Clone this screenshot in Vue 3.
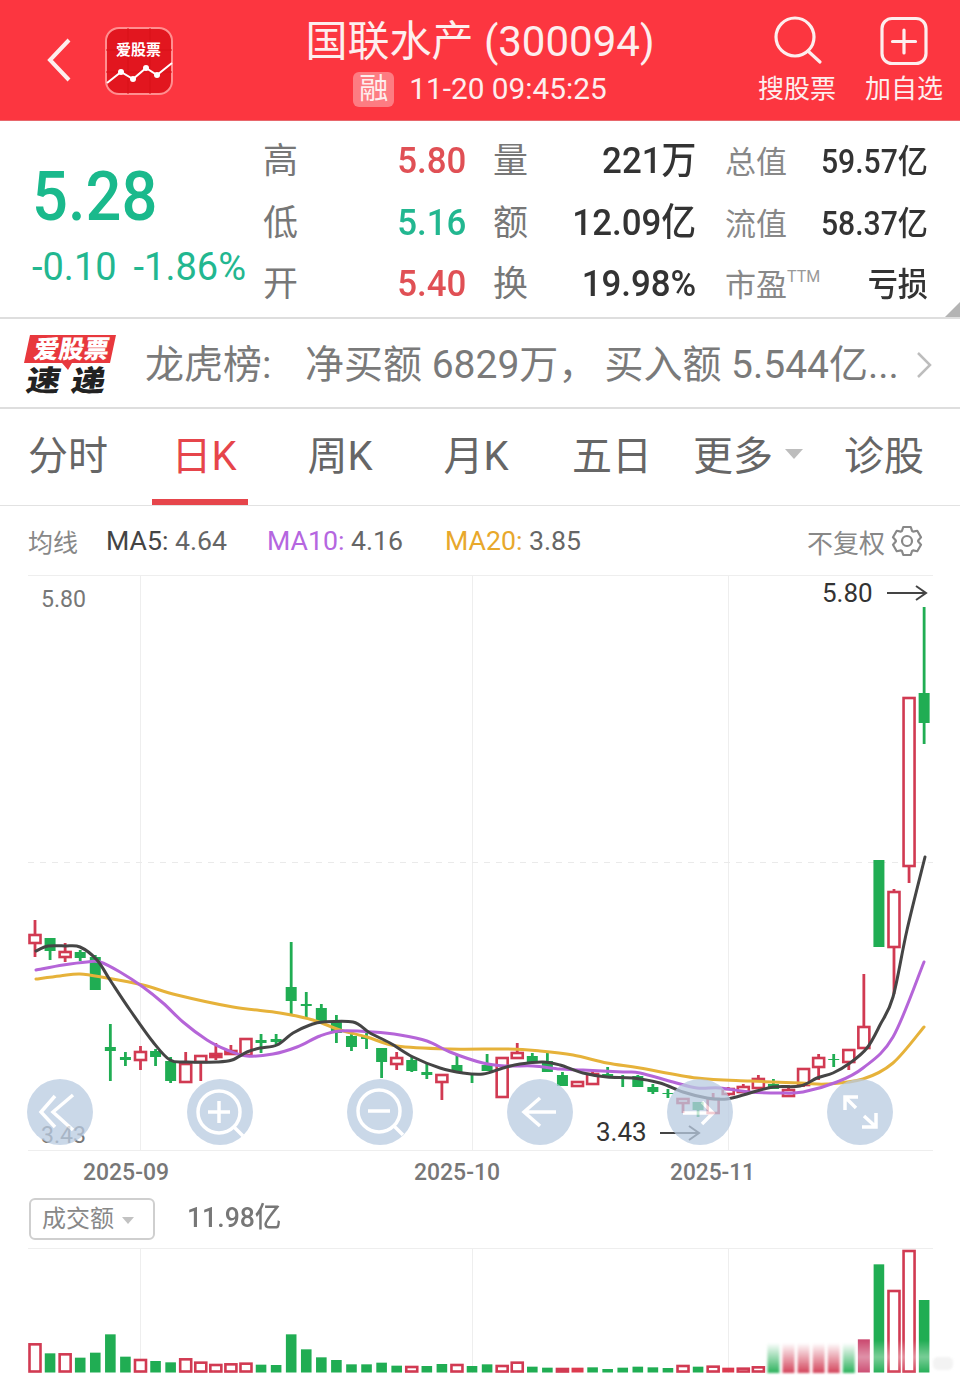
<script setup>
const px = (i) => 35 + i * 15.07
const C = [
  ['r',934,943,920,957],['g',938,951,938,960],['r',951,957,943,962],['g',952,958,950,961],['g',957,990,955,990],
  ['g',1047,1051,1024,1081],['g',1057,1060,1052,1066],['r',1051,1060,1046,1070],['g',1051,1057,1049,1066],['g',1061,1081,1057,1083],
  ['r',1063,1082,1052,1082],['r',1055,1062,1055,1081],['s',1053,1057,1043,1060],['s',1050,1054,1045,1055],['r',1038,1055,1038,1055],
  ['g',1040,1043,1034,1053],['g',1039,1042,1034,1045],['g',987,1001,942,1015],['g',1004,1006,992,1018],['g',1008,1022,1004,1023],
  ['g',1022,1033,1015,1043],['g',1036,1047,1033,1051],['g',1037,1039,1033,1049],['g',1048,1062,1048,1078],['r',1057,1064,1052,1070],
  ['g',1060,1071,1057,1072],['g',1072,1075,1063,1079],['r',1074,1082,1074,1100],['g',1065,1072,1055,1073],['g',1074,1075,1074,1083],
  ['g',1065,1071,1054,1071],['r',1057,1097,1057,1098],['r',1052,1058,1043,1059],['g',1056,1063,1053,1063],['g',1061,1072,1053,1072],
  ['g',1075,1086,1072,1086],['r',1081,1086,1081,1086],['r',1073,1084,1071,1085],['g',1074,1077,1067,1078],['g',1078,1079,1075,1087],
  ['g',1076,1087,1075,1087],['g',1087,1092,1084,1094],['g',1093,1094,1089,1098],['r',1098,1103,1098,1113],['g',1102,1110,1102,1117],
  ['r',1098,1113,1093,1114],['r',1088,1094,1087,1096],['r',1086,1092,1084,1093],['r',1078,1088,1075,1089],['g',1084,1089,1079,1089],
  ['r',1089,1096,1085,1097],['r',1068,1085,1068,1087],['r',1057,1067,1054,1080],['g',1059,1060,1054,1067],['r',1049,1062,1049,1070],
  ['r',1026,1048,974,1048],['g',860,947,860,947],['r',891,947,889,994],['r',697,866,697,883],['g',693,723,607,744],
]
const candles = C.map(([t, top, bot, wt, wb], i) => ({ t, top, bot, wt, wb, x: px(i) }))

const zy = [460,490,490,503,488,433,500,507,513,517,505,515,522,520,518,524,525,433,478,502,510,523,523,518,527,528,528,522,522,528,523,525,515,530,533,534,533,532,537,533,530,532,534,525,530,527,533,533,529,530,527,527,527,527,527,448,223,300,180,330]
const zt = 'rgrggggrggrrrrrggggggggggrggrggrrggrrggggggrgrrrrgrrrrgrgrrg'.split('')
const solidRed = new Set([36, 37, 46])
const vols = zy.map((z, i) => ({
  x: px(i),
  top: 1190 + z / 3,
  g: zt[i] === 'g',
  solid: solidRed.has(i) || i === 55,
}))
const smear = [49,50,51,52,53,54,55,56,57,58,59].map((i) => ({ x: px(i), g: zt[i] === 'g' }))

function smooth(p) {
  let d = `M${p[0][0]} ${p[0][1]}`
  for (let i = 0; i < p.length - 1; i++) {
    const a = p[i - 1] || p[i], b = p[i], c = p[i + 1], e = p[i + 2] || c
    const k = 1 / 6
    d += `C${(b[0] + (c[0] - a[0]) * k).toFixed(1)} ${(b[1] + (c[1] - a[1]) * k).toFixed(1)} ${(c[0] - (e[0] - b[0]) * k).toFixed(1)} ${(c[1] - (e[1] - b[1]) * k).toFixed(1)} ${c[0]} ${c[1]}`
  }
  return d
}
const ma5 = smooth([[36,951],[48,946],[65,946],[80,947],[97,960],[110,980],[130,1010],[153,1042],[170,1060],[187,1062],[217,1062],[232,1060],[247,1052],[260,1048],[277,1045],[293,1033],[310,1025],[323,1022],[353,1022],[370,1033],[390,1043],[413,1057],[440,1068],[463,1073],[483,1074],[503,1068],[520,1064],[543,1062],[560,1065],[583,1073],[607,1077],[633,1078],[660,1083],[683,1092],[707,1098],[727,1099],[750,1093],[773,1087],[800,1086],[817,1078],[833,1073],[850,1063],[867,1048],[880,1025],[893,997],[907,930],[925,857]])
const ma10 = smooth([[36,970],[63,965],[87,962],[100,962],[120,972],[143,987],[163,1003],[183,1022],[207,1040],[227,1050],[247,1056],[273,1054],[297,1047],[320,1036],[340,1031],[373,1032],[400,1035],[427,1041],[450,1052],[483,1063],[507,1066],[533,1066],[560,1069],[583,1070],[623,1072],[640,1073],[673,1082],[697,1088],[720,1088],[750,1092],[780,1093],[803,1092],[837,1082],[863,1068],[893,1037],[924,962]])
const ma20 = smooth([[36,979],[60,976],[80,974],[107,978],[143,985],[177,995],[233,1007],[280,1013],[313,1020],[340,1030],[367,1037],[397,1046],[450,1049],[507,1049],[540,1051],[573,1055],[607,1063],[640,1068],[697,1078],[750,1081],[800,1083],[827,1084],[863,1079],[893,1063],[924,1027]])

const gear = (() => {
  const pts = []
  for (let k = 0; k < 6; k++) {
    const a = k * 60 + 30
    for (const [o, r] of [[-15, 14.5], [15, 14.5], [27, 11.2], [33, 11.2]]) {
      const t = ((a + o) * Math.PI) / 180
      pts.push(`${(16 + r * Math.cos(t)).toFixed(2)} ${(16 + r * Math.sin(t)).toFixed(2)}`)
    }
  }
  return 'M' + pts.join('L') + 'Z'
})()

const msgHead = '龙虎榜:'
const msgMid = '净买额 6829万'
const msgEnd = '买入额 5.544亿...'

const stats = [
  { k: '高', v: '5.80', c: 'up', k2: '量', v2: '221万', k3: '总值', v3: '59.57亿' },
  { k: '低', v: '5.16', c: 'down', k2: '额', v2: '12.09亿', k3: '流值', v3: '58.37亿' },
  { k: '开', v: '5.40', c: 'up', k2: '换', v2: '19.98%', k3: '市盈', sup: 'TTM', v3: '亏损' },
]
const tabs = ['分时', '日K', '周K', '月K', '五日', '更多', '诊股']
const grids = [140, 472, 728]
</script>

<template>
  <div class="page">
    <header class="top">
      <div class="top-left">
        <svg class="back" width="24" height="44" viewBox="0 0 24 44"><path d="M22 2 3 22l19 20" /></svg>
        <svg class="logo" width="68" height="68" viewBox="105 27 68 68">
          <rect x="106" y="28" width="66" height="66" rx="13" fill="#e2161f" stroke="#ff8f90" stroke-width="2" />
          <path d="M106 50h66M106 72h66M128 28v66M150 28v66" stroke="#d81019" stroke-width="1" fill="none" />
          <text class="logo-text" x="138.500" y="55" text-anchor="middle">爱股票</text>
          <path d="M107 83 121 72l12 7 13-11 11 7 15-12" fill="none" stroke="#fff" stroke-width="2" />
          <circle cx="121" cy="72" r="3" fill="#fff" /><circle cx="133" cy="79" r="3" fill="#fff" />
          <circle cx="146" cy="68" r="3" fill="#fff" /><circle cx="157" cy="75" r="3" fill="#fff" />
        </svg>
      </div>
      <div class="top-mid">
        <div class="title">国联水产 (300094)</div>
        <div class="sub"><span class="rong">融</span><span class="time">11-20 09:45:25</span></div>
      </div>
      <div class="top-right">
        <div class="tool">
          <svg width="52" height="50" viewBox="0 0 52 50" class="tool-ico"><circle cx="24" cy="21" r="19" /><path d="m37 35 12 11" /></svg>
          <span>搜股票</span>
        </div>
        <div class="tool">
          <svg width="48" height="50" viewBox="0 0 48 50" class="tool-ico"><rect x="2" y="2.500" width="44" height="45" rx="10" /><path d="M24 14v23M12.500 25.500h23" /></svg>
          <span>加自选</span>
        </div>
      </div>
    </header>

    <section class="quote">
      <div class="price">
        <div class="last">5.28</div>
        <div class="chg"><span>-0.10</span><span>-1.86%</span></div>
      </div>
      <div class="stats">
        <div v-for="s in stats" :key="s.k" class="row">
          <div class="cell c1"><span class="k">{{ s.k }}</span><span class="v" :class="s.c">{{ s.v }}</span></div>
          <div class="cell c2"><span class="k">{{ s.k2 }}</span><span class="v">{{ s.v2 }}</span></div>
          <div class="cell c3"><span class="k3">{{ s.k3 }}<sup v-if="s.sup">{{ s.sup }}</sup></span><span class="v3">{{ s.v3 }}</span></div>
        </div>
      </div>
      <i class="corner"></i>
    </section>

    <section class="ticker">
      <svg class="news" width="96" height="72" viewBox="22 327 96 72">
        <path d="M30 335h86l-6 28H72l-4 7-6-7H24z" fill="#e8383d" />
        <text class="news-a" x="33" y="358" transform="translate(63 0) skewX(-10)" textLength="75">爱股票</text>
        <text class="news-b" x="25" y="460" transform="translate(69 0) skewX(-10) scale(1 .85)" textLength="79">速递</text>
      </svg>
      <div class="msg"><span class="m1">{{ msgHead }}</span><span>{{ msgMid }}</span><span class="comma">，</span><span>{{ msgEnd }}</span></div>
      <svg class="more" width="16" height="28" viewBox="0 0 16 28"><path d="m2 2 12 12L2 26" /></svg>
    </section>

    <nav class="tabs">
      <div v-for="(t, i) in tabs" :key="t" class="tab" :class="{ on: i === 1 }">
        {{ t }}<i v-if="i === 5" class="caret"></i>
      </div>
    </nav>

    <div class="ma">
      <span class="ma-t">均线</span>
      <span class="ma5">MA5: <em>4.64</em></span>
      <span class="ma10">MA10: <em>4.16</em></span>
      <span class="ma20">MA20: <em>3.85</em></span>
      <span class="adj">不复权
        <svg width="32" height="32" viewBox="0 0 32 32" class="gear">
          <path :d="gear" />
          <circle cx="16" cy="16" r="5" />
        </svg>
      </span>
    </div>

    <svg class="chart" width="960" height="615" viewBox="0 575 960 615">
      <path d="M28 575.500h905M28 1150.500h905" class="grid" />
      <path v-for="g in grids" :key="g" :d="`M${g}.5 576V1150`" class="grid" />
      <path d="M28 862.500h905" class="dash" />
      <text class="lab" x="41" y="607" textLength="45" lengthAdjust="spacingAndGlyphs">5.80</text>
      <text class="lab" x="41" y="1143" textLength="45" lengthAdjust="spacingAndGlyphs">3.43</text>
      <text class="lab2" x="822" y="602">5.80</text>
      <path d="M887 593h38m-9-7 10 7-10 7" class="arr" />
      <text class="lab2" x="596" y="1141">3.43</text>
      <path d="M660 1133h38m-9-7 10 7-10 7" class="arr" />

      <g v-for="(c, i) in candles" :key="i">
        <template v-if="c.t === 'g'">
          <rect :x="c.x - 1.400" :y="c.wt" width="2.800" :height="c.wb - c.wt" fill="#20ad53" />
          <rect :x="c.x - 5.500" :y="c.top" width="11" :height="c.bot - c.top" fill="#20ad53" />
        </template>
        <template v-else>
          <rect :x="c.x - 1.400" :y="c.wt" width="2.800" :height="c.wb - c.wt" fill="#d13a52" />
          <rect :x="c.x - 5.500" :y="c.top + 1" width="11" :height="c.bot - c.top - 1" :fill="c.t === 's' ? '#e02a42' : '#fff'" stroke="#d13a52" stroke-width="2.600" />
        </template>
      </g>

      <path :d="ma20" class="line" stroke="#e6b23a" />
      <path :d="ma10" class="line" stroke="#b565d8" />
      <path :d="ma5" class="line" stroke="#454545" />

      <g class="btn">
        <circle cx="60" cy="1112" r="33" />
        <path d="m55 1096-14 16 14 15M73 1095l-20 17 20 18" />
      </g>
      <g class="btn">
        <circle cx="220" cy="1112" r="33" />
        <circle class="ico" cx="219" cy="1112" r="21" />
        <path d="m234 1127 9 9M208 1112h22M219 1101v22" />
      </g>
      <g class="btn">
        <circle cx="380" cy="1112" r="33" />
        <circle class="ico" cx="379" cy="1111" r="21" />
        <path d="m394 1126 9 9M368 1111h22" />
      </g>
      <g class="btn">
        <circle cx="540" cy="1112" r="33" />
        <path d="M556 1112h-32m16-14-16 14 16 14" />
      </g>
      <g class="btn">
        <circle cx="700" cy="1112" r="33" />
        <path d="M683 1113h30m-11-11 11 11-11 11" />
      </g>
      <g class="btn">
        <circle cx="860" cy="1112" r="33" />
        <path d="M845 1110v-13h13m-13 0 11 11M876 1113v14h-14m14 0-12-11" />
      </g>

      <text class="date" x="83" y="1180" textLength="86" lengthAdjust="spacingAndGlyphs">2025-09</text>
      <text class="date" x="414" y="1180" textLength="86" lengthAdjust="spacingAndGlyphs">2025-10</text>
      <text class="date" x="670" y="1180" textLength="85" lengthAdjust="spacingAndGlyphs">2025-11</text>
    </svg>

    <div class="vol-head">
      <div class="sel"><span>成交额</span><i></i></div>
      <div class="vol-val">11.98亿</div>
    </div>

    <svg class="vol" width="960" height="133" viewBox="0 1248 960 133">
      <defs>
        <linearGradient id="sr" x1="0" y1="0" x2="0" y2="1">
          <stop offset="0" stop-color="#d13a52" stop-opacity="0" />
          <stop offset="1" stop-color="#d13a52" stop-opacity=".95" />
        </linearGradient>
        <linearGradient id="sg" x1="0" y1="0" x2="0" y2="1">
          <stop offset="0" stop-color="#20ad53" stop-opacity="0" />
          <stop offset="1" stop-color="#20ad53" stop-opacity=".95" />
        </linearGradient>
        <linearGradient id="sw" x1="0" y1="0" x2="0" y2="1">
          <stop offset="0" stop-color="#fff" stop-opacity="0" />
          <stop offset=".5" stop-color="#fff" stop-opacity=".4" />
          <stop offset="1" stop-color="#fff" stop-opacity="0" />
        </linearGradient>
      </defs>
      <path d="M28 1248.500h905" class="grid" />
      <path v-for="g in grids" :key="g" :d="`M${g}.5 1249V1373`" class="grid" />
      <template v-for="(b, i) in vols" :key="i">
        <template v-if="i < 49 || i > 54">
          <rect v-if="b.g" :x="b.x - 5.300" :y="b.top" width="10.600" :height="1372.500 - b.top" fill="#20ad53" />
          <rect v-else-if="b.solid" :x="b.x - 6" :y="b.top" width="12" :height="1372.500 - b.top" :fill="i === 55 ? '#cb4a70' : '#dc3a4e'" />
          <rect v-else :x="b.x - 5.500" :y="b.top + 1" width="11" :height="1371.500 - b.top - 1" fill="#fff" stroke="#d13a52" stroke-width="2.600" />
        </template>
      </template>
      <g class="smear">
        <template v-for="s in smear" :key="s.x">
          <rect v-if="s.x < 860" :x="s.x - 6" y="1343" width="12" height="30" :fill="s.g ? 'url(#sg)' : 'url(#sr)'" />
          <rect v-else :x="s.x - 8" y="1340" width="16" height="34" fill="url(#sw)" />
        </template>
        <rect x="933" y="1357" width="20" height="13" rx="5" fill="#f3f3f3" />
      </g>
    </svg>
  </div>
</template>

<style>
html, body { margin: 0; background: #fff; }
</style>

<style scoped>
.page {
  width: 960px;
  height: 1381px;
  overflow: hidden;
  background: #fff;
  font-family: Roboto, "Noto Sans CJK SC", sans-serif;
  color: #333;
}
svg { display: block; }
i { font-style: normal; }

.top {
  height: 120px;
  background: #fc3640;
  border-bottom: 1px solid #e8676c;
  display: grid;
  grid-template-columns: 1fr auto 1fr;
  color: #fdeeee;
}
.top-left { display: flex; align-items: center; padding-left: 47px; gap: 34px; }
.back path { fill: none; stroke: #fdeeee; stroke-width: 4; }
.logo { margin-top: 1px; }
.logo-text { font-size: 15px; font-weight: 700; fill: #fff; }
.top-mid { display: flex; flex-direction: column; align-items: center; padding-top: 16px; }
.title { font-size: 42px; line-height: 52px; letter-spacing: 0; }
.sub { display: flex; align-items: center; gap: 15px; font-size: 29.800px; line-height: 36px; margin-top: 3px; }
.rong {
  width: 41px; height: 35px; border-radius: 6px;
  background: rgba(255, 255, 255, .35);
  font-size: 29px; line-height: 35px; text-align: center;
}
.top-right { display: flex; justify-content: flex-end; gap: 29px; padding: 16px 17px 0 0; }
.tool { display: flex; flex-direction: column; align-items: center; font-size: 26px; line-height: 32px; }
.tool-ico { margin-bottom: 7px; }
.tool-ico circle, .tool-ico rect, .tool-ico path { fill: none; stroke: #fdeeee; stroke-width: 3.200; stroke-linecap: round; }

.quote {
  height: 196px;
  border-bottom: 2px solid #dedede;
  display: flex;
  position: relative;
}
.price { width: 263px; padding-left: 32px; box-sizing: border-box; }
.last {
  font-size: 68px; line-height: 70px; margin-top: 41px; color: #1ab98c; font-weight: 500;
  transform: scaleX(.93); transform-origin: left center;
}
.chg { display: flex; justify-content: space-between; width: 214px; margin-top: 14px; font-size: 38px; line-height: 42px; color: #22b790; }
.stats { display: flex; flex-direction: column; padding-top: 17px; }
.row { display: flex; flex: none; height: 61.500px; align-items: baseline; }
.cell { display: flex; justify-content: space-between; align-items: baseline; }
.c1 { width: 203px; }
.c2 { width: 203px; margin-left: 27px; }
.c3 { width: 203px; margin-left: 29px; }
.k { font-size: 35px; line-height: 44px; color: #777; }
.v { font-size: 37.500px; line-height: 44px; font-weight: 500; color: #333; transform: scaleX(.93); transform-origin: right center; white-space: nowrap; }
.v.up { color: #e05055; }
.v.down { color: #22b790; }
.k3 { font-size: 31px; line-height: 44px; color: #888; position: relative; }
.k3 sup { font-size: 16px; vertical-align: baseline; position: relative; top: -14px; line-height: 0; color: #999; }
.v3 { font-size: 33.500px; line-height: 44px; font-weight: 500; color: #333; transform: scaleX(.9); transform-origin: right center; white-space: nowrap; }
.corner {
  position: absolute; right: 0; bottom: 0; width: 0; height: 0;
  border-left: 15px solid transparent;
  border-bottom: 15px solid #b4b4b4;
}

.ticker {
  height: 88px;
  border-bottom: 2px solid #dedede;
  display: flex;
  align-items: center;
  padding-left: 22px;
  position: relative;
}
.news { flex: none; }
.news-a { font-size: 25px; font-weight: 900; fill: #fff; }
.news-b { font-size: 34px; font-weight: 900; fill: #222; }
.msg { margin-left: 27px; padding-top: 4px; font-size: 39px; line-height: 48px; color: #7a7a7a; white-space: nowrap; }
.m1 { display: inline-block; width: 160px; }
.comma { margin-right: 7px; }
.more { position: absolute; left: 916px; top: 32px; }
.more path { fill: none; stroke: #bdbdbd; stroke-width: 2.500; }

.tabs {
  height: 96px;
  border-bottom: 1px solid #e2e2e2;
  display: grid;
  grid-template-columns: repeat(7, 136px);
}
.tab {
  position: relative;
  display: flex; align-items: center; justify-content: center;
  font-size: 40px;
  color: #666;
  padding-bottom: 9px;
}
.tab.on { color: #e6454b; }
.tab.on::after {
  content: ""; position: absolute; left: 16px; bottom: 0; width: 96px; height: 6px; background: #e6454b;
}
.caret {
  margin-left: 12px; margin-top: 2px; width: 0; height: 0;
  border-left: 9px solid transparent; border-right: 9px solid transparent; border-top: 10px solid #bdbdbd;
}

.ma {
  height: 69px;
  display: flex;
  align-items: center;
  padding: 1px 37px 0 28px;
  box-sizing: border-box;
  font-size: 26.700px;
}
.ma em { font-style: normal; color: #666; }
.ma-t { color: #888; width: 78px; font-size: 25px; }
.ma5 { color: #444; width: 161px; }
.ma10 { color: #b566e0; width: 178px; }
.ma20 { color: #e8a82c; }
.adj { margin-left: auto; color: #888; font-size: 26px; display: flex; align-items: center; gap: 6px; }
.gear circle, .gear path { fill: none; stroke: #888; stroke-width: 2.200; stroke-linejoin: round; }

.grid { stroke: #eeeeee; stroke-width: 1; fill: none; }
.dash { stroke: #eaeaea; stroke-width: 1; stroke-dasharray: 6 6; fill: none; }
.lab { font-size: 24px; fill: #777; }
.lab2 { font-size: 26px; fill: #333; }
.arr { fill: none; stroke: #444; stroke-width: 2; }
.line { fill: none; stroke-width: 3; stroke-linejoin: round; stroke-linecap: round; }
.btn { opacity: .75; }
.btn > circle:first-child { fill: #b9cbe1; }
.btn path, .btn .ico { fill: none; stroke: #fff; stroke-width: 3.500; }
.date { font-size: 24.500px; font-weight: 500; fill: #777; }
.smear { filter: blur(1.200px); }

.vol-head {
  height: 58px;
  display: flex;
  align-items: flex-start;
  padding: 8px 0 0 29px;
  box-sizing: border-box;
}
.sel {
  width: 126px; height: 42px;
  border: 2px solid #cfcfcf; border-radius: 6px;
  box-sizing: border-box;
  display: flex; align-items: center;
  padding-left: 11px;
  font-size: 24px;
  color: #888;
}
.sel span { margin-top: -5px; }
.sel i {
  margin-left: 8px; margin-top: 3px; width: 0; height: 0;
  border-left: 6px solid transparent; border-right: 6px solid transparent; border-top: 7px solid #c2c2c2;
}
.vol-val {
  margin-left: 32px; font-size: 28px; line-height: 40px; font-weight: 500; color: #777;
  transform: scaleX(.95); transform-origin: left center;
}
</style>
